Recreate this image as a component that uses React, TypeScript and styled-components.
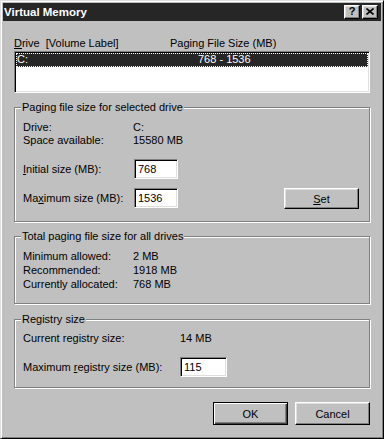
import React from 'react';
import styled, { createGlobalStyle } from 'styled-components';

const GlobalStyle = createGlobalStyle`
  html, body {
    margin: 0;
    padding: 0;
    background: #c0c0c0;
  }
  body {
    font-family: "Liberation Sans", Arial, sans-serif;
    font-size: 11px;
    color: #000;
  }
  * {
    box-sizing: border-box;
  }
`;

const Window = styled.div`
  width: 384px;
  height: 439px;
  background: #c0c0c0;
  border: 1px solid;
  border-color: #dfdfdf #000 #000 #dfdfdf;
  box-shadow: inset 1px 1px 0 #fff, inset -1px -1px 0 #808080;
  padding: 2px;
  display: flex;
  flex-direction: column;
`;

const TitleBar = styled.div`
  height: 18px;
  background: #262626;
  display: flex;
  align-items: center;
  padding: 0 3px 0 1px;
`;

const TitleText = styled.div`
  flex: 1;
  color: #fff;
  font-weight: bold;
  font-size: 11.5px;
  line-height: 13px;
`;

const TitleButtons = styled.div`
  display: flex;
  gap: 2px;
`;

const raised = `
  background: #c0c0c0;
  border: 1px solid;
  border-color: #fff #000 #000 #fff;
  box-shadow: inset -1px -1px 0 #808080, inset 1px 1px 0 #dfdfdf;
`;

const CaptionButton = styled.div`
  ${raised}
  width: 16px;
  height: 14px;
  display: flex;
  align-items: center;
  justify-content: center;
  font-weight: bold;
  font-size: 11px;
  line-height: 11px;
  padding-bottom: 1px;
`;

const Body = styled.div`
  flex: 1;
  display: flex;
  flex-direction: column;
  padding: 0 11px;
`;

const ListHeader = styled.div`
  margin-top: 16px;
  display: grid;
  grid-template-columns: 156px 1fr;
  line-height: 13px;
  margin-bottom: 1px;
`;

const sunken = `
  background: #fff;
  border: 1px solid;
  border-color: #808080 #fff #fff #808080;
  box-shadow: inset 1px 1px 0 #000, inset -1px -1px 0 #dfdfdf;
`;

const ListBox = styled.div`
  ${sunken}
  height: 42px;
  padding: 1px;
`;

const ListRow = styled.div<{ selected?: boolean }>`
  height: 14px;
  display: grid;
  grid-template-columns: 181px 1fr;
  padding-left: 1px;
  line-height: 13px;
  background: ${(p) => (p.selected ? '#262626' : 'transparent')};
  color: ${(p) => (p.selected ? '#fff' : '#000')};
  outline: ${(p) => (p.selected ? '1px dotted #fff' : 'none')};
  outline-offset: -1px;
`;

const Group = styled.div<{ top: number; pad: string }>`
  position: relative;
  margin-top: ${(p) => p.top}px;
  padding: ${(p) => p.pad};
  border: 1px solid #808080;
  box-shadow: inset 1px 1px 0 #fff, 1px 1px 0 #fff;
`;

const Caption = styled.div`
  position: absolute;
  top: -7px;
  left: 6px;
  padding: 0 1px;
  background: #c0c0c0;
  line-height: 13px;
`;

const InfoGrid = styled.div<{ labelWidth: number; row: number }>`
  display: grid;
  grid-template-columns: ${(p) => p.labelWidth}px 1fr;
  grid-auto-rows: ${(p) => p.row}px;
  line-height: 13px;
`;

const FieldRow = styled.div<{ gap: number }>`
  display: flex;
  align-items: flex-start;
  margin-top: ${(p) => p.gap}px;
`;

const FieldLabel = styled.label<{ width: number }>`
  width: ${(p) => p.width}px;
  height: 20px;
  display: flex;
  align-items: center;
  line-height: 13px;
`;

const TextBox = styled.input<{ w: number }>`
  ${sunken}
  width: ${(p) => p.w}px;
  height: 20px;
  padding: 0 0 0 3px;
  font-family: "Liberation Sans", Arial, sans-serif;
  font-size: 11px;
  color: #000;
  outline: none;
`;

const Button = styled.button<{ isDefault?: boolean }>`
  ${raised}
  width: 75px;
  height: ${(p) => (p.isDefault !== undefined ? 23 : 21)}px;
  font-family: "Liberation Sans", Arial, sans-serif;
  font-size: 11px;
  color: #000;
  padding: 0;
  ${(p) =>
    p.isDefault
      ? `border: 1px solid #000;
         box-shadow: inset 1px 1px 0 #fff, inset -1px -1px 0 #404040, inset -2px -2px 0 #808080;`
      : ''}
`;

const SetButton = styled(Button)`
  margin-left: auto;
`;

const ButtonRow = styled.div`
  margin-top: 14px;
  display: flex;
  justify-content: flex-end;
  gap: 7px;
`;

const Key = styled.span`
  text-decoration: underline;
`;

const CloseIcon = () => (
  <svg width="8" height="7" viewBox="0 0 8 7">
    <path d="M0.5 0.5 L7.5 6.5 M7.5 0.5 L0.5 6.5" stroke="#000" strokeWidth="1.6" />
  </svg>
);

export default function App() {
  return (
    <>
      <GlobalStyle />
      <Window>
        <TitleBar>
          <TitleText>Virtual Memory</TitleText>
          <TitleButtons>
            <CaptionButton>?</CaptionButton>
            <CaptionButton>
              <CloseIcon />
            </CaptionButton>
          </TitleButtons>
        </TitleBar>
        <Body>
          <ListHeader>
            <span>
              <Key>D</Key>rive&nbsp; [Volume Label]
            </span>
            <span>Paging File Size (MB)</span>
          </ListHeader>
          <ListBox>
            <ListRow selected>
              <span>C:</span>
              <span>768 - 1536</span>
            </ListRow>
          </ListBox>

          <Group top={14} pad="13px 10px 12px 8px">
            <Caption>Paging file size for selected drive</Caption>
            <InfoGrid labelWidth={110} row={13}>
              <span>Drive:</span>
              <span>C:</span>
              <span>Space available:</span>
              <span>15580 MB</span>
            </InfoGrid>
            <FieldRow gap={12}>
              <FieldLabel width={111}>
                <span>
                  <Key>I</Key>nitial size (MB):
                </span>
              </FieldLabel>
              <TextBox w={44} defaultValue="768" />
            </FieldRow>
            <FieldRow gap={9}>
              <FieldLabel width={111}>
                <span>
                  Ma<Key>x</Key>imum size (MB):
                </span>
              </FieldLabel>
              <TextBox w={44} defaultValue="1536" />
              <SetButton>
                <Key>S</Key>et
              </SetButton>
            </FieldRow>
          </Group>

          <Group top={14} pad="13px 10px 11px 8px">
            <Caption>Total paging file size for all drives</Caption>
            <InfoGrid labelWidth={110} row={14}>
              <span>Minimum allowed:</span>
              <span>2 MB</span>
              <span>Recommended:</span>
              <span>1918 MB</span>
              <span>Currently allocated:</span>
              <span>768 MB</span>
            </InfoGrid>
          </Group>

          <Group top={15} pad="12px 10px 10px 8px">
            <Caption>Registry size</Caption>
            <InfoGrid labelWidth={157} row={13}>
              <span>Current registry size:</span>
              <span>14 MB</span>
            </InfoGrid>
            <FieldRow gap={12}>
              <FieldLabel width={157}>
                <span>
                  Maximum <Key>r</Key>egistry size (MB):
                </span>
              </FieldLabel>
              <TextBox w={47} defaultValue="115" />
            </FieldRow>
          </Group>

          <ButtonRow>
            <Button isDefault>OK</Button>
            <Button isDefault={false}>Cancel</Button>
          </ButtonRow>
        </Body>
      </Window>
    </>
  );
}
